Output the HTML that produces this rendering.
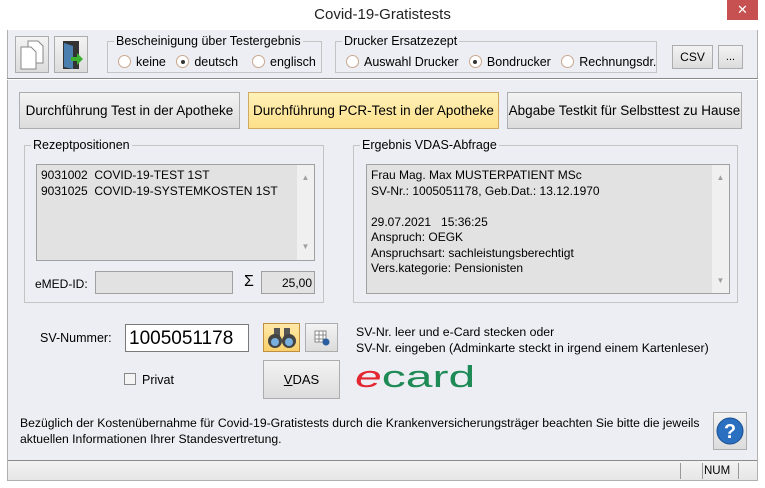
<!DOCTYPE html><html><head><meta charset="utf-8"><style>
*{box-sizing:border-box}body{margin:0;width:765px;height:488px;background:#fff;font-family:"Liberation Sans",sans-serif;font-size:12px;color:#000;position:relative;overflow:hidden}
.a{position:absolute}
.client{left:7px;top:30px;width:751px;height:451px;background:#eceef3;border-left:1px solid #b0b0b0;border-right:1px solid #b0b0b0;border-bottom:1px solid #b0b0b0}
.btn{position:absolute;background:linear-gradient(#f3f3f3,#dcdcdc);border:1px solid #adadad;display:flex;align-items:center;justify-content:center;font-size:13px}
.grp{position:absolute;border:1px solid #c4c4c4}
.grp>.l{position:absolute;top:-8px;left:6px;background:#eceef3;padding:0 2px;font-size:12.5px}
.r{display:inline-block;width:13px;height:13px;border:1px solid #c9a88e;border-radius:50%;background:#fff;vertical-align:-2px;margin-right:5px;position:relative}
.r.on::after{content:"";position:absolute;left:3.5px;top:3.5px;width:4px;height:4px;border-radius:50%;background:#333}
.list{position:absolute;background:#e2e2e2;border:1px solid #a0a0a0;font-size:12px;line-height:15.5px;padding:2px 4px}
.sb{position:absolute;right:0;top:0;bottom:0;width:17px;background:#f0f0f0;color:#a0a0a0;font-size:8px;text-align:center}
</style></head><body>
<div class="a" style="left:0;top:6px;width:765px;text-align:center;font-size:15px;color:#222">Covid-19-Gratistests</div>
<div class="a" style="left:727px;top:0;width:31px;height:20px;background:#c75050;color:#fff;text-align:center;font-size:13px;line-height:20px">✕</div>
<div class="a client"></div>
<div class="btn" style="left:15px;top:36px;width:34px;height:37px"><svg width="26" height="30"><path d="M9 1h10l5 5v17H9z" fill="#fff" stroke="#888"/><path d="M2 7h10l5 5v17H2z" fill="#fff" stroke="#888"/></svg></div>
<div class="btn" style="left:54px;top:36px;width:34px;height:37px"><svg width="26" height="32"><path d="M5 2h16v28H5z" fill="#333"/><path d="M6 4l9 3v23l-9-2z" fill="#4a7fb0"/><path d="M13 18h6v-4l6 6-6 6v-4h-6z" fill="#3cb030"/></svg></div>
<div class="a" style="left:7px;top:78px;width:751px;height:2px;border-top:1px solid #8a8a8a;border-bottom:1px solid #fff"></div>
<div class="grp" style="left:107px;top:41px;width:215px;height:32px"><span class="l">Bescheinigung über Testergebnis</span>
<div class="a" style="left:10px;top:13px;font-size:12.5px;white-space:nowrap"><span class="r"></span>keine &nbsp;&nbsp;<span class="r on"></span>deutsch &nbsp;&nbsp;&nbsp;<span class="r"></span>englisch</div></div>
<div class="grp" style="left:335px;top:41px;width:322px;height:32px"><span class="l">Drucker Ersatzezept</span>
<div class="a" style="left:10px;top:13px;font-size:12.5px;white-space:nowrap"><span class="r"></span>Auswahl Drucker &nbsp;&nbsp;<span class="r on"></span>Bondrucker &nbsp;&nbsp;<span class="r"></span>Rechnungsdr.</div></div>
<div class="btn" style="left:672px;top:45px;width:41px;height:24px;font-size:12px">CSV</div>
<div class="btn" style="left:718px;top:45px;width:25px;height:24px;font-size:11px">...</div>
<div class="btn" style="left:19px;top:92px;width:221px;height:37px;font-size:13.5px">Durchführung Test in der Apotheke</div>
<div class="btn" style="left:248px;top:92px;width:251px;height:37px;font-size:13.5px;background:linear-gradient(#fff1b8,#fde08a);border-color:#d0aa60">Durchführung PCR-Test in der Apotheke</div>
<div class="btn" style="left:507px;top:92px;width:235px;height:37px;font-size:13.5px">Abgabe Testkit für Selbsttest zu Hause</div>
<div class="grp" style="left:24px;top:145px;width:300px;height:158px"><span class="l">Rezeptpositionen</span></div>
<div class="list" style="left:36px;top:164px;width:279px;height:97px;line-height:16px">9031002&nbsp; COVID-19-TEST 1ST<br>9031025&nbsp; COVID-19-SYSTEMKOSTEN 1ST<div class="sb"><div style="margin-top:5px">▲</div><div style="position:absolute;bottom:5px;width:100%">▼</div></div></div>
<div class="a" style="left:35px;top:277px">eMED-ID:</div>
<div class="a" style="left:95px;top:271px;width:138px;height:23px;background:#e2e2e2;border:1px solid #a0a0a0"></div>
<div class="a" style="left:244px;top:273px;font-size:16px">Σ</div>
<div class="a" style="left:261px;top:271px;width:54px;height:23px;background:#e2e2e2;border:1px solid #a0a0a0;text-align:right;padding:4px 2px 0 0">25,00</div>
<div class="grp" style="left:353px;top:145px;width:385px;height:158px"><span class="l">Ergebnis VDAS-Abfrage</span></div>
<div class="list" style="left:366px;top:164px;width:364px;height:130px;padding-top:3px">Frau Mag. Max MUSTERPATIENT MSc<br>SV-Nr.: 1005051178, Geb.Dat.: 13.12.1970<br><br>29.07.2021&nbsp;&nbsp; 15:36:25<br>Anspruch: OEGK<br>Anspruchsart: sachleistungsberechtigt<br>Vers.kategorie: Pensionisten<div class="sb"><div style="margin-top:5px">▲</div><div style="position:absolute;bottom:5px;width:100%">▼</div></div></div>
<div class="a" style="left:40px;top:331px;font-size:12.5px">SV-Nummer:</div>
<div class="a" style="left:125px;top:324px;width:124px;height:28px;background:#fff;border:1px solid #7a7a7a;font-size:19px;padding:3px 0 0 3px">1005051178</div>
<div class="btn" style="left:263px;top:323px;width:37px;height:29px;background:linear-gradient(#ffe9a8,#f8cf6a);border-color:#c09040"><svg width="30" height="22"><rect x="7" y="1" width="6" height="8" fill="#555"/><rect x="17" y="1" width="6" height="8" fill="#555"/><circle cx="8" cy="14" r="7" fill="#444"/><circle cx="22" cy="14" r="7" fill="#444"/><circle cx="8" cy="15" r="4" fill="#7ab0e0"/><circle cx="22" cy="15" r="4" fill="#7ab0e0"/></svg></div>
<div class="btn" style="left:305px;top:323px;width:33px;height:29px"><svg width="16" height="16"><path d="M1 1h11v11H1zM1 5h11M1 9h11M5 1v11M9 1v11" fill="#fff" stroke="#888"/><circle cx="12" cy="12" r="3.5" fill="#2a5ea0"/></svg></div>
<div class="a" style="left:356px;top:324px;font-size:12.3px;line-height:16px;white-space:nowrap">SV-Nr. leer und e-Card stecken oder<br>SV-Nr. eingeben (Adminkarte steckt in irgend einem Kartenleser)</div>
<div class="a" style="left:124px;top:373px;width:12px;height:12px;border:1px solid #888;background:#f4f4f4"></div>
<div class="a" style="left:142px;top:373px;font-size:12.5px">Privat</div>
<div class="btn" style="left:263px;top:360px;width:77px;height:39px;font-size:13px"><span><u>V</u>DAS</span></div>
<div class="a" style="left:355px;top:360px;font-size:31px;line-height:34px;transform:scaleX(1.55);transform-origin:0 0;white-space:nowrap"><span style="color:#e3262f;font-style:italic">e</span><span style="color:#1e8a55">card</span></div>
<div class="a" style="left:20px;top:415px;font-size:12.2px;line-height:16px;white-space:nowrap">Bezüglich der Kostenübernahme für Covid-19-Gratistests durch die Krankenversicherungsträger beachten Sie bitte die jeweils<br>aktuellen Informationen Ihrer Standesvertretung.</div>
<div class="btn" style="left:713px;top:412px;width:34px;height:38px"><svg width="28" height="28"><circle cx="14" cy="14" r="13" fill="#2a6fc0" stroke="#1a4f90"/><text x="14" y="21" text-anchor="middle" fill="#fff" font-size="20" font-weight="bold" font-family="Liberation Sans">?</text></svg></div>
<div class="a" style="left:8px;top:460px;width:749px;height:20px;border-top:1px solid #8a8a8a;background:linear-gradient(#f2f2f2,#e6e6e6)"></div>
<div class="a" style="left:680px;top:463px;width:1px;height:16px;background:#999"></div>
<div class="a" style="left:702px;top:463px;width:1px;height:16px;background:#999"></div>
<div class="a" style="left:738px;top:463px;width:1px;height:16px;background:#999"></div>
<div class="a" style="left:704px;top:465px;font-size:11.5px">NUM</div>
</body></html>
